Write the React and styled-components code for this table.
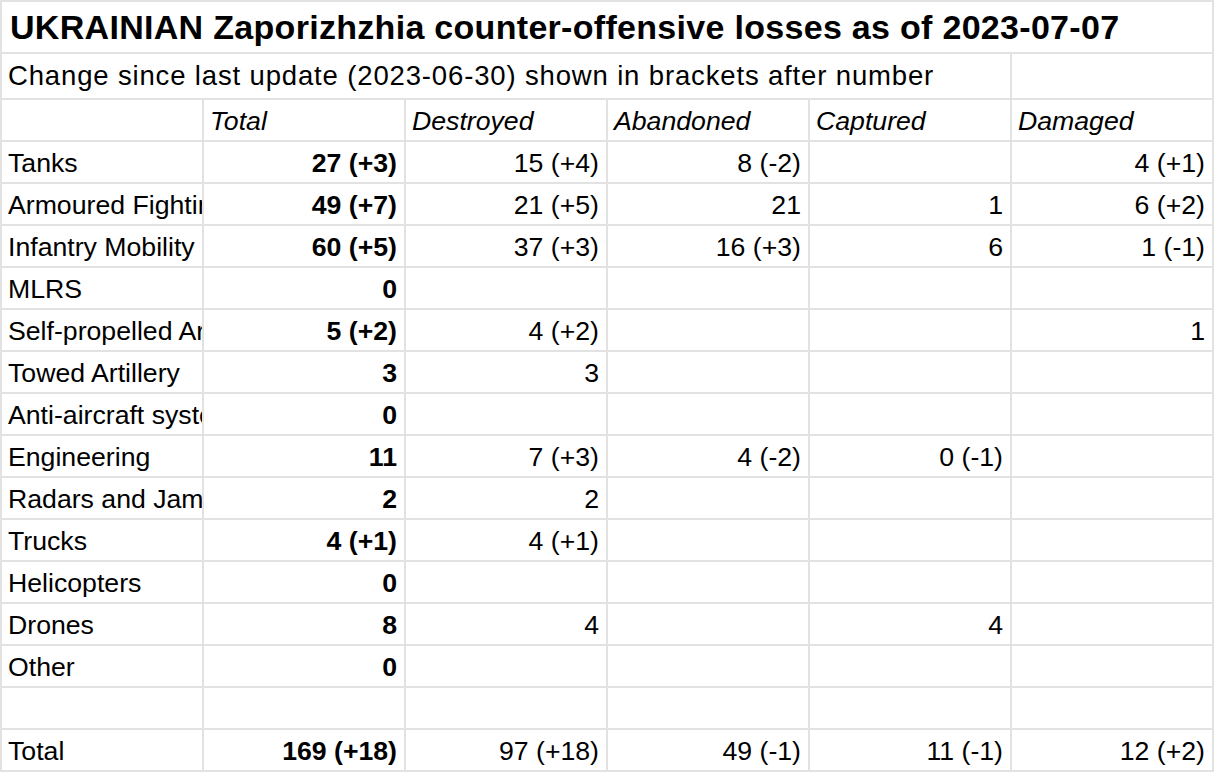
import React from 'react'
import styled, { createGlobalStyle } from 'styled-components'

const GlobalStyle = createGlobalStyle`
  body {
    margin: 0;
    background: #ffffff;
    font-family: "Liberation Sans", Arial, sans-serif;
    color: #000000;
  }
`

const rows = [
  ['Tanks', '27 (+3)', '15 (+4)', '8 (-2)', '', '4 (+1)'],
  ['Armoured Fighting Vehicles', '49 (+7)', '21 (+5)', '21', '1', '6 (+2)'],
  ['Infantry Mobility Vehicles', '60 (+5)', '37 (+3)', '16 (+3)', '6', '1 (-1)'],
  ['MLRS', '0', '', '', '', ''],
  ['Self-propelled Artillery', '5 (+2)', '4 (+2)', '', '', '1'],
  ['Towed Artillery', '3', '3', '', '', ''],
  ['Anti-aircraft systems', '0', '', '', '', ''],
  ['Engineering', '11', '7 (+3)', '4 (-2)', '0 (-1)', ''],
  ['Radars and Jammers', '2', '2', '', '', ''],
  ['Trucks', '4 (+1)', '4 (+1)', '', '', ''],
  ['Helicopters', '0', '', '', '', ''],
  ['Drones', '8', '4', '', '4', ''],
  ['Other', '0', '', '', '', ''],
  ['', '', '', '', '', ''],
  ['Total', '169 (+18)', '97 (+18)', '49 (-1)', '11 (-1)', '12 (+2)'],
]

const headers = ['', 'Total', 'Destroyed', 'Abandoned', 'Captured', 'Damaged']

const App = () => {
  return (
    <>
      <GlobalStyle />
      <Sheet>
        <Title $span={6}>UKRAINIAN Zaporizhzhia counter-offensive losses as of 2023-07-07</Title>
        <Note $span={5}>Change since last update (2023-06-30) shown in brackets after number</Note>
        <Cell />
        {headers.map((h, i) => (
          <Cell key={'h' + i} $italic>{h}</Cell>
        ))}
        {rows.map((row, r) =>
          row.map((value, c) => (
            <Cell
              key={r + '-' + c}
              $right={c > 0}
              $bold={c === 1}
            >
              {value}
            </Cell>
          ))
        )}
      </Sheet>
    </>
  )
}

const Sheet = styled.div`
  display: grid;
  grid-template-columns: repeat(6, 200px);
  grid-template-rows: 50px 44px repeat(16, 40px);
  gap: 2px;
  padding: 2px;
  width: max-content;
  background: #e2e2e2;
`

const Cell = styled.div`
  grid-column: span ${p => p.$span || 1};
  background: #ffffff;
  display: flex;
  align-items: flex-end;
  justify-content: ${p => (p.$right ? 'flex-end' : 'flex-start')};
  padding: 0 7px 4px 6px;
  overflow: hidden;
  white-space: nowrap;
  font-size: 26.67px;
  line-height: 30px;
  font-weight: ${p => (p.$bold ? 700 : 400)};
  font-style: ${p => (p.$italic ? 'italic' : 'normal')};
`

const Note = styled(Cell)`
  font-size: 27.5px;
  letter-spacing: 0.85px;
  padding-bottom: 7px;
`

const Title = styled(Cell)`
  font-size: 34px;
  font-weight: 700;
  letter-spacing: 0.3px;
  line-height: 40px;
  padding-left: 8px;
  padding-bottom: 5px;
`

export default App
